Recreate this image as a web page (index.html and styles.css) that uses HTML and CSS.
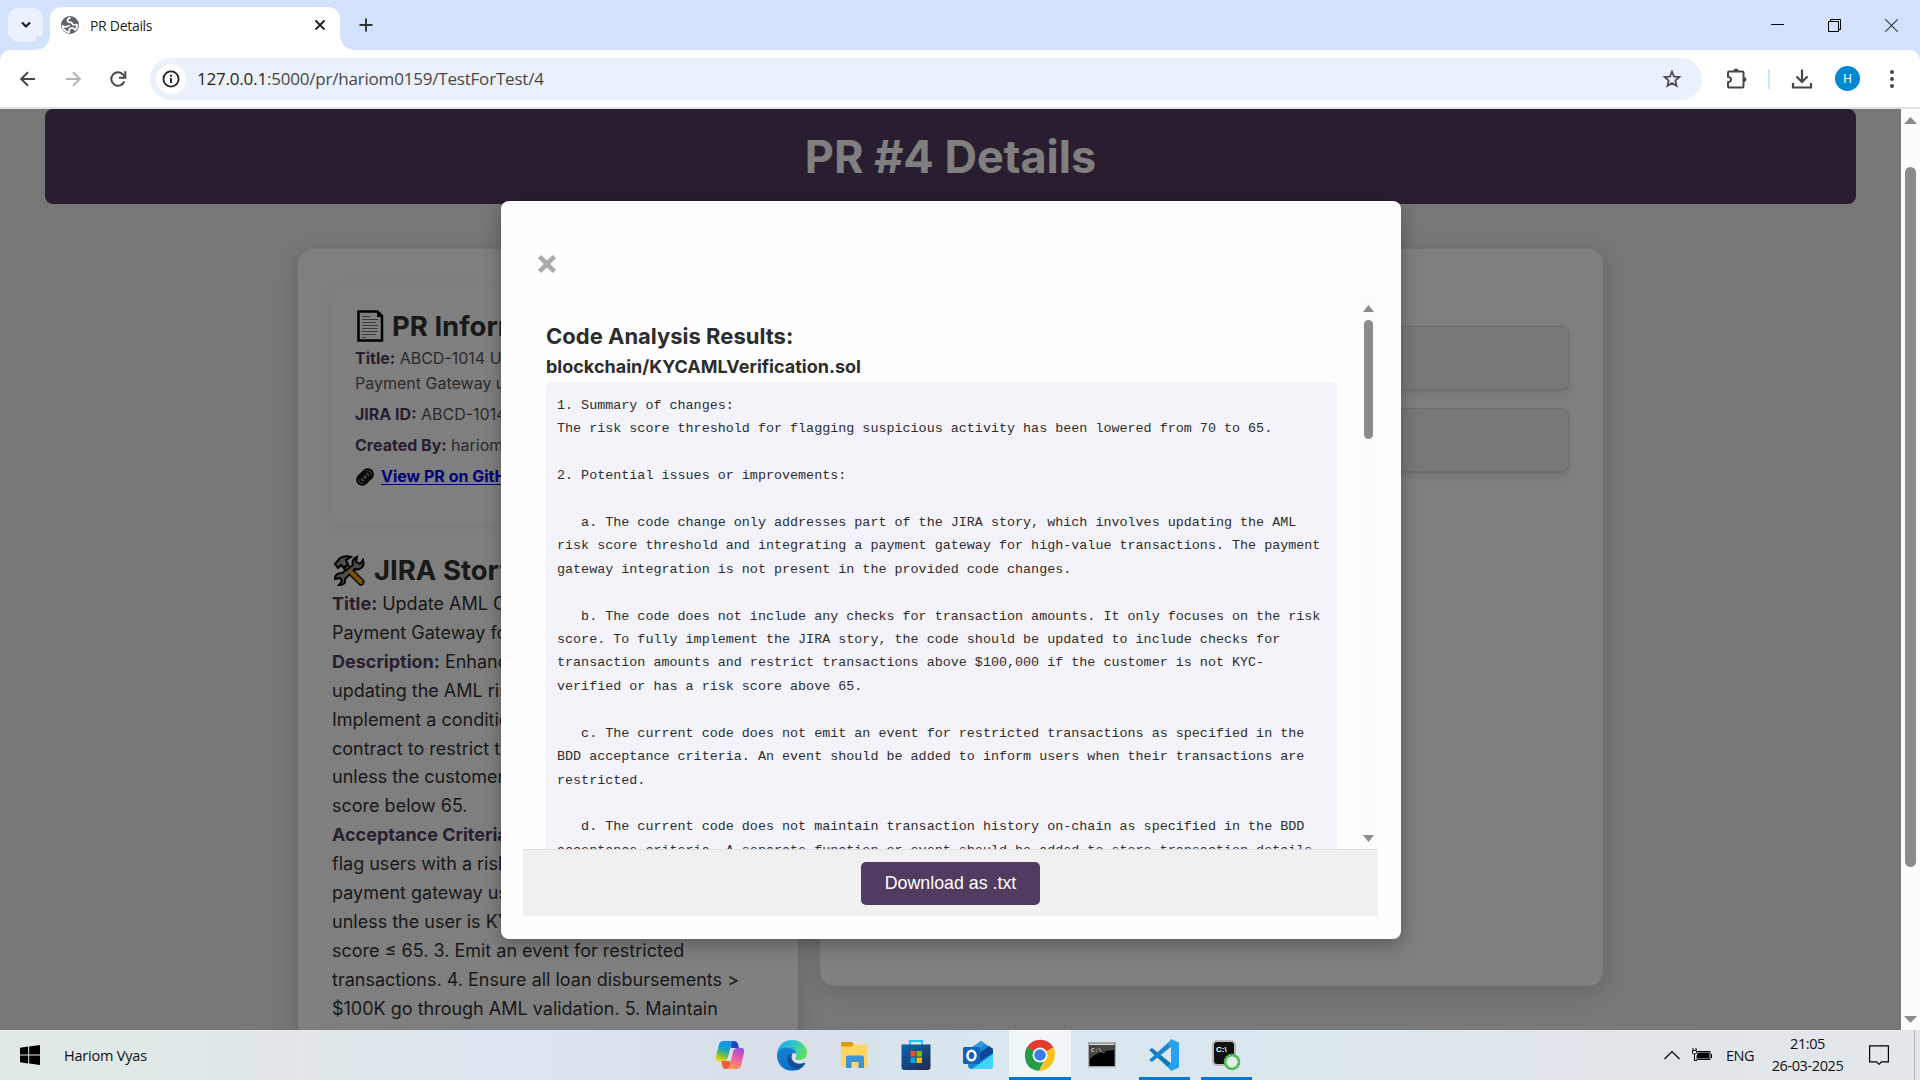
FILE: index.html
```html
<!DOCTYPE html>
<html lang="en">
<head>
<meta charset="utf-8">
<title>PR Details</title>
<link rel="stylesheet" href="styles.css">
</head>
<body>
<div class="tabstrip">
  <div class="tab-search"><svg width="12" height="8" viewBox="0 0 12 8"><path d="M2 1.5l4 4 4-4" fill="none" stroke="#1f1f1f" stroke-width="2.2"/></svg></div>
  <div class="tab">
    <svg class="globe" width="18" height="18" viewBox="0 0 18 18"><circle cx="9" cy="9" r="9" fill="#5f6368"/><path d="M9.5 1.6C7 2.4 6.3 3.6 6.6 5c.3 1.2 1.8 1.3 3.4 1.3 1.4 0 .8 2 2.2 2.4 1.4.5 2.6-.6 4.2.2-.2 2-1 3.800-2.200 5-1.300-.1-1.200-1.800-2.600-2-1.600-.3-2.300.5-3.200 1.500-.8.900.2 1.800-.3 2.900C4.500 15.900 2 13.200 1.700 10c1 .3 2.200 1 3.700.800 1.500-.3 1.900-1.200 3.400-1.300" fill="none" stroke="#fff" stroke-width="1.7"/></svg>
    <span class="tab-title">PR Details</span>
    <svg class="tab-close" width="12" height="12" viewBox="0 0 12 12"><path d="M1.500 1.500l9 9M10.500 1.500l-9 9" stroke="#1f1f1f" stroke-width="1.800"/></svg>
  </div>
  <svg class="tab-new" width="14" height="14" viewBox="0 0 14 14"><path d="M7 .5v13M.5 7h13" stroke="#333" stroke-width="1.900"/></svg>
  <div class="window-controls">
    <svg width="13" height="13" viewBox="0 0 13 13"><path d="M0 5.500h13" stroke="#000"/></svg>
    <svg width="13" height="13" viewBox="0 0 13 13"><path d="M.5 2.500h10v10h-10zM2.500 2.500v-2h10v10h-2" fill="none" stroke="#000"/></svg>
    <svg width="13" height="13" viewBox="0 0 13 13"><path d="M.3.3l12.400 12.400M12.700.3L.3 12.700" stroke="#333" stroke-width="1.100"/></svg>
  </div>
</div>
<div class="toolbar">
  <div class="nav">
    <svg width="20" height="20" viewBox="0 0 20 20"><path d="M17 10H3.500M10 3.200L3.200 10l6.800 6.800" fill="none" stroke="#474747" stroke-width="2"/></svg>
    <svg width="20" height="20" viewBox="0 0 20 20"><path d="M3 10h13.500M10 3.200l6.800 6.800-6.800 6.800" fill="none" stroke="#b4b4b4" stroke-width="2"/></svg>
    <svg width="20" height="20" viewBox="0 0 20 20"><path d="M16.300 12.300A6.700 6.700 0 1 1 15.500 6.200L16.500 7.500" fill="none" stroke="#474747" stroke-width="2"/><path d="M17.300 2.300v6.400h-6.400" fill="none" stroke="#474747" stroke-width="2"/></svg>
  </div>
  <div class="omnibox">
    <span class="site-info"><svg width="20" height="20" viewBox="0 0 20 20"><circle cx="10" cy="10" r="7.600" fill="none" stroke="#202124" stroke-width="1.800"/><path d="M10 9v5M10 5.800v1.900" stroke="#202124" stroke-width="1.900"/></svg></span>
    <span class="url"><b>127.0.0.1</b>:5000/pr/hariom0159/TestForTest/4</span>
    <svg class="star" width="20" height="20" viewBox="0 0 20 20"><path d="M10 2.500l2 5.100 5.400.4-4.100 3.500 1.300 5.400L10 14l-4.600 2.900 1.300-5.400L2.600 8l5.400-.4z" fill="none" stroke="#474747" stroke-width="1.700"/></svg>
  </div>
  <div class="actions">
    <svg width="22" height="22" viewBox="0 0 22 22"><path d="M2 4.500Q2 3.500 3 3.500h13.500q1 0 1 1V18.500q0 1-1 1H3q-1 0-1-1v-4.300q3-.4 3-2.700t-3-2.700z" fill="none" stroke="#474747" stroke-width="2"/><path d="M7.500 3a2.500 2.500 0 0 1 5 0zM18 9a2.500 2.500 0 0 1 0 5z" fill="#474747"/></svg>
    <i class="divider"></i>
    <svg width="22" height="22" viewBox="0 0 22 22"><path d="M11 1.500v12M5.500 8.500l5.500 5.500 5.500-5.500M2 15v4.500h18V15" fill="none" stroke="#474747" stroke-width="2.200"/></svg>
    <span class="avatar">H</span>
    <svg width="6" height="20" viewBox="0 0 6 20"><g fill="#474747"><circle cx="3" cy="3" r="2"/><circle cx="3" cy="10" r="2"/><circle cx="3" cy="17" r="2"/></g></svg>
  </div>
</div>

<div class="viewport">
  <div class="page">
    <header class="banner"><h1>PR #4 Details</h1></header>
    <main class="columns">
      <section class="card details">
        <div class="info">
          <h2><svg class="doc" width="27" height="32" viewBox="0 0 27 32"><path d="M1.500 1.500h19L25 6v24.500H1.500z" fill="#fff" stroke="#000" stroke-width="2.500"/><path d="M20 2v5h5" fill="#000"/><path d="M5 6.500h8M5 9.500h16M5 12.500h14M5 15.500h16M5 18.500h16M5 21.500h16M5 24.500h14M5 27.500h4" stroke="#777"/></svg>PR Information</h2>
          <p><b>Title:</b> ABCD-1014 Update<br>Payment Gateway using</p>
          <p><b>JIRA ID:</b> ABCD-1014</p>
          <p><b>Created By:</b> hariom0159</p>
          <a href="#"><svg class="clip" width="20" height="18" viewBox="0 0 20 18"><g transform="rotate(-45 10 9)" fill="none" stroke="#000"><rect x="1" y="4" width="18" height="10" rx="5" fill="#777" stroke-width="2"/><rect x="4" y="6" width="12" height="6" rx="3" stroke-width="1.500"/><circle cx="10" cy="9" r="2.500" stroke-width="1"/></g></svg> View PR on GitHub</a>
        </div>
        <h2><svg class="tools" width="32" height="31" viewBox="0 0 32 31"><path d="M13 12l15 15" stroke="#000" stroke-width="7" stroke-linecap="round"/><path d="M14 13l14 14" stroke="#f4a300" stroke-width="4" stroke-linecap="round"/><path d="M2 9l5-6q5-3 11-1l-5 3 2 4-4 4-3-3-3 3z" fill="#999" stroke="#000" stroke-width="2"/><path d="M20 10q-2-5 4-8l-1 5 4 2 3-4q2 7-4 9-2 1-4 0L12 24q1 6-6 6l3-4-2-3-5 1q0-6 7-6z" fill="#999" stroke="#000" stroke-width="2"/><path d="M18 17l9 9" stroke="#f4a300" stroke-width="4" stroke-linecap="round"/></svg>JIRA Story</h2>
        <div class="story">
          <b>Title:</b> Update AML Compliance<br>
          Payment Gateway for<br>
          <b>Description:</b> Enhance<br>
          updating the AML risk<br>
          Implement a condition<br>
          contract to restrict the<br>
          unless the customer<br>
          score below 65.<br>
          <b>Acceptance Criteria:</b><br>
          flag users with a risk<br>
          payment gateway using<br>
          unless the user is KYC<br>
          score ≤ 65. 3. Emit an event for restricted<br>
          transactions. 4. Ensure all loan disbursements &gt;<br>
          $100K go through AML validation. 5. Maintain<br>
          transaction history on-chain.
        </div>
      </section>
      <section class="card files">
        <div class="file"></div>
        <div class="file"></div>
      </section>
    </main>
    <div class="overlay">
      <div class="modal">
        <div class="modal-top"><span class="close">×</span></div>
        <div class="modal-scroll">
          <div class="results">
            <h3>Code Analysis Results:</h3>
            <h4>blockchain/KYCAMLVerification.sol</h4>
            <pre>1. Summary of changes:
The risk score threshold for flagging suspicious activity has been lowered from 70 to 65.

2. Potential issues or improvements:

   a. The code change only addresses part of the JIRA story, which involves updating the AML
risk score threshold and integrating a payment gateway for high-value transactions. The payment
gateway integration is not present in the provided code changes.

   b. The code does not include any checks for transaction amounts. It only focuses on the risk
score. To fully implement the JIRA story, the code should be updated to include checks for
transaction amounts and restrict transactions above $100,000 if the customer is not KYC-
verified or has a risk score above 65.

   c. The current code does not emit an event for restricted transactions as specified in the
BDD acceptance criteria. An event should be added to inform users when their transactions are
restricted.

   d. The current code does not maintain transaction history on-chain as specified in the BDD
acceptance criteria. A separate function or event should be added to store transaction details</pre>
          </div>
          <div class="bar inner"><i class="up"></i><i class="thumb"></i><i class="down"></i></div>
        </div>
        <div class="modal-foot"><button class="download">Download as .txt</button></div>
      </div>
    </div>
  </div>
  <div class="bar outer"><i class="up"></i><i class="thumb"></i><i class="down"></i></div>
</div>

<div class="taskbar">
  <svg class="start" width="20" height="20" viewBox="0 0 20 20"><path d="M0 2.800L8.200 1.600v7.900H0zM9.200 1.500L20 0v9.500H9.200zM0 10.500h8.200v7.900L0 17.200zM9.200 10.500H20V20L9.200 18.500z"/></svg>
  <span class="user">Hariom Vyas</span>
  <div class="apps">
    <span class="app"><svg width="30" height="30" viewBox="0 0 30 30"><defs><linearGradient id="c1" x1=".6" y1="0" x2=".3" y2="1"><stop offset="0" stop-color="#1a8fe8"/><stop offset=".4" stop-color="#159fd0"/><stop offset=".7" stop-color="#6dba4a"/><stop offset="1" stop-color="#f5d400"/></linearGradient><linearGradient id="c2" x1=".7" y1="0" x2=".3" y2="1"><stop offset="0" stop-color="#a14be8"/><stop offset=".5" stop-color="#f0609a"/><stop offset="1" stop-color="#ff9a55"/></linearGradient></defs><path d="M15 1h4.500q2.500 0 3.300 2.500L24 8h-8z" fill="#1a49c8"/><path d="M15 29h-4.500q-2.500 0-3.300-3L6.500 21h9z" fill="#f5603c"/><path d="M8.500 1H19q-1.800.5-2.500 3L13 17q-1 4-4.500 4H4q-4 0-3-4.500L4 4.500Q5 1 8.500 1z" fill="url(#c1)"/><path d="M21.500 29H12q1.800-.5 2.500-3L18 12q1-4 4.500-4H26q4 0 3 4.500l-3 13Q25 29 21.500 29z" fill="url(#c2)"/></svg></span>
    <span class="app"><svg width="30" height="31" viewBox="0 0 30 31"><defs><linearGradient id="e1" x1="0" y1=".2" x2="1" y2=".5"><stop offset="0" stop-color="#27a8e0"/><stop offset=".5" stop-color="#2bc3cf"/><stop offset="1" stop-color="#62e05a"/></linearGradient><linearGradient id="e2" x1="0" y1="0" x2=".5" y2="1"><stop offset="0" stop-color="#1583cf"/><stop offset="1" stop-color="#0a6fd0"/></linearGradient></defs><path d="M0 14C1 5 7 0 15 0c9 0 15 6 15 13 0 5-4 7-8 7-3 0-4.500-1.500-3-3 1-1.500 0-4-3-6C11 8 4 8 0 14z" fill="url(#e1)"/><path d="M0 15C1 9 6 7 11 8c5 0 8 3 8 6-2-2-5-1-5 4 0 6 5 10 9 11-4 2-9 2-13 1C4 28 0 22 0 15z" fill="url(#e2)"/><path d="M11 15c-2 5 1 13 9 15 4-1 6-3 8-6 .4-1-.5-1.500-1.500-1-3 1.400-8 1-10.500-2-1.500-2-2-4-1-6.500-1.500 0-3 .5-4 .5z" fill="#104f97"/></svg></span>
    <span class="app"><svg width="28" height="26" viewBox="0 0 28 26"><path d="M1 1q0-1 1-1h10l2 3v4H1z" fill="#dd9a04"/><path d="M1 4.500h11l2-2h12.500q1 0 1 1V24q0 1-1 1H2q-1 0-1-1z" fill="#ffd663"/><path d="M6 26V15.500q0-2 2-2h14q2 0 2 2V26h-5.500v-6h-7v6z" fill="#3d93d4"/></svg></span>
    <span class="app"><svg width="30" height="32" viewBox="0 0 30 32"><defs><linearGradient id="s1" x1="0" y1="0" x2=".7" y2="1"><stop offset="0" stop-color="#0966ae"/><stop offset="1" stop-color="#20305f"/></linearGradient></defs><path d="M9 6V2h12v4" fill="none" stroke="#25c0f2" stroke-width="2"/><path d="M.5 5.500h29V28q0 3-3 3h-23q-3 0-3-3z" fill="url(#s1)"/><path fill="#f25022" d="M9.500 12h5v5.500h-5z"/><path fill="#7fba00" d="M15.500 12h5.500v5.500h-5.500z"/><path fill="#00a4ef" d="M9.500 18.500h5V24h-5z"/><path fill="#ffb900" d="M15.500 18.500h5.500V24h-5.500z"/></svg></span>
    <span class="app"><svg width="31" height="30" viewBox="0 0 31 30"><path d="M5 10L18 1l12 8v16q0 4-4 4H9q-4 0-4-4z" fill="#1a86d0"/><path d="M5 10L18 1l4 3L9 16z" fill="#2e9be0"/><path d="M14 15l12-9 4 3v4L16 22z" fill="#0b479c"/><path d="M9 29l21-15v12q0 3-3 3z" fill="#41d3fb"/><rect y="7" width="17" height="17" rx="1.500" fill="#0f63b8"/><ellipse cx="8.500" cy="15.500" rx="4" ry="4.800" fill="none" stroke="#fff" stroke-width="2.500"/></svg></span>
    <span class="app active"><svg width="30" height="32" viewBox="0 0 30 32"><path d="M15 16L2 8.500A15.200 15.200 0 0 1 28.500 8.500z" fill="#e33b2e"/><path d="M15 16l13.500-8q3 7 0 14.500-4 9-14 9.500L21 18z" fill="#fcc31e"/><path d="M15 16l5 4-6 12Q4 31 1 23-1.500 15 2 8z" fill="#259b48"/><circle cx="15" cy="16" r="7.500" fill="#fff"/><circle cx="15" cy="16" r="5.800" fill="#3a7cec"/></svg></span>
    <span class="app"><svg width="28" height="26" viewBox="0 0 28 26"><rect x=".7" y=".7" width="26.600" height="24" fill="#000" stroke="#aaa" stroke-width="1.400"/><path d="M1.400 1.400h25.200V3H1.400z" fill="#ddd"/><path d="M1.400 3h25.200v5Q9 9 1.400 17z" fill="#444"/><text x="3" y="9.500" font-family="Liberation Mono" font-size="6" fill="#fff">C:\_</text></svg></span>
    <span class="app open"><svg width="30" height="32" viewBox="0 0 30 32"><path d="M0 11l3-2 20 16-1 6z" fill="#1577b8"/><path d="M0 21l3 2L23 7l-1-6z" fill="#1c86ca"/><path d="M22 0l8 3.500v25L22 32 19 27 22 24V8l-3-3z" fill="#27a3ee"/></svg></span>
    <span class="app open"><svg width="29" height="31" viewBox="0 0 29 31"><rect x="1" y="1" width="22" height="24" rx="4" fill="#111" stroke="#b9b9b9" stroke-width="2"/><text x="4" y="11.500" font-family="Liberation Sans" font-weight="700" font-size="8" fill="#fff">C:\</text><circle cx="20" cy="22" r="7" fill="#dff0e2" stroke="#42b14e" stroke-width="2.600"/><circle cx="20" cy="22" r="7" fill="none" stroke="#b9e2bd" stroke-width="1" stroke-dasharray="1 2"/></svg></span>
  </div>
  <div class="tray">
    <svg width="16" height="10" viewBox="0 0 16 10"><path d="M.5 9L8 1.500 15.500 9" fill="none" stroke="#000" stroke-width="1.200"/></svg>
    <svg class="battery" width="20" height="14" viewBox="0 0 20 14"><path d="M5 3.500h13v8H4.500M19.500 6v4" fill="none" stroke="#000"/><path d="M6 4.500h11v6H4.500V8z"/><path d="M1 0v2M4 0v2M.5 2.500h4V5l-1 1h-2L.5 5zM2.500 6v6.500H5" fill="none" stroke="#000"/></svg>
    <span class="lang">ENG</span>
    <div class="clock"><span>21:05</span><span>26-03-2025</span></div>
    <svg class="note" width="20" height="20" viewBox="0 0 20 20"><path d="M.6.8h18.800v16H12.500l-2.500 2.500-2.500-2.500H.6z" fill="none" stroke="#000" stroke-width="1.200"/></svg>
    <i class="desk"></i>
  </div>
</div>
</body>
</html>
```
FILE: styles.css
```css
* { box-sizing: border-box; }
body { margin: 0; width: 1920px; height: 1080px; overflow: hidden; display: flex; flex-direction: column; font-family: "Open Sans", "Noto Sans", sans-serif; background: #fff; }
svg { display: block; flex: none; }
h1, h2, h3, h4, p, pre { margin: 0; }
i { display: block; }

/* browser tabs */
.tabstrip { height: 50px; flex: none; background: #d3e3fd; display: flex; align-items: center; padding-left: 8px; }
.tab-search { width: 35px; height: 34px; border-radius: 11px; background: #ebf2fe; display: grid; place-items: center; margin-right: 7px; }
.tab { position: relative; width: 290px; height: 43px; align-self: flex-end; background: #fff; border-radius: 12px 12px 0 0; display: flex; align-items: center; padding: 0 14px 7px 11px; }
.tab::before, .tab::after { content: ""; position: absolute; bottom: 0; width: 14px; height: 14px; }
.tab::before { left: -14px; background: radial-gradient(circle at 0 0, #d3e3fd 13.500px, #fff 14px); }
.tab::after { right: -14px; background: radial-gradient(circle at 100% 0, #d3e3fd 13.500px, #fff 14px); }
.tab-title { margin-left: 11px; font-size: 14px; letter-spacing: -0.300px; color: #1f1f1f; flex: 1; }
.tab-new { margin-left: 19px; }
.window-controls { margin-left: auto; display: flex; gap: 44px; padding-right: 22px; }

/* browser toolbar */
.toolbar { height: 59px; flex: none; background: #fff; border-bottom: 2px solid #dfe4e1; display: flex; align-items: center; position: relative; }
.toolbar::before, .toolbar::after { content: ""; position: absolute; top: 0; width: 10px; height: 10px; }
.toolbar::before { left: 0; background: radial-gradient(circle at 100% 100%, #fff 9.500px, #d3e3fd 10px); }
.toolbar::after { right: 0; background: radial-gradient(circle at 0 100%, #fff 9.500px, #d3e3fd 10px); }
.nav { display: flex; gap: 25px; padding-left: 18px; width: 150px; }
.omnibox { width: 1552px; height: 42px; border-radius: 21px; background: #ebf1fa; display: flex; align-items: center; padding: 0 20px 0 6px; }
.site-info { width: 30px; height: 30px; border-radius: 50%; background: #fff; display: grid; place-items: center; }
.url { flex: 1; margin-left: 11px; font-size: 17px; color: #474747; letter-spacing: -0.200px; }
.url b { font-weight: 400; color: #1f1f1f; }
.actions { display: flex; align-items: center; padding-left: 24px; }
.divider { width: 2px; height: 20px; background: #d3e3fd; margin: 0 21px 0 20px; }
.avatar { width: 25px; height: 25px; border-radius: 50%; background: #0288d1; color: #fff; font: 12px Roboto, sans-serif; display: grid; place-items: center; margin: 0 29px 0 22px; }

/* page content */
.viewport { height: 921px; flex: none; display: flex; }
.page { width: 1901px; position: relative; overflow: hidden; background: #eee; font-family: Inter, sans-serif; }
.banner { margin: 0 45px; height: 95px; background: #503c60; border-radius: 8px; text-align: center; }
.banner h1 { font-size: 45px; line-height: 95px; color: #fff; letter-spacing: 0; }
.columns { display: flex; gap: 22px; padding: 45px 0 0 298px; }
.card { background: #fff; border-radius: 15px; box-shadow: 0 5px 25px rgba(0, 0, 0, .15); }
.details { width: 500px; height: 900px; padding: 34px; white-space: nowrap; }
.files { width: 783px; height: 737px; padding: 77px 34px; display: flex; flex-direction: column; gap: 17px; }
.file { height: 65px; background: #f1f1f1; border: 1px solid #dcdcdc; border-bottom-width: 2px; border-radius: 8px; box-shadow: 0 3px 8px rgba(0, 0, 0, .1); }
.info { height: 242px; padding: 23px; border-radius: 10px; box-shadow: 0 2px 12px rgba(0, 0, 0, .05); margin-bottom: 25px; color: #555; font-size: 16px; line-height: 25px; }
h2 { display: flex; align-items: center; font-size: 27.500px; line-height: 40px; color: #333; }
.doc { margin: 0 8px 0 2px; }
.tools { margin: 0 9px 0 1px; }
.info p { margin-bottom: 6px; }
.info b, .story b { color: #503c60; font-weight: 700; }
.info a { display: inline-flex; gap: 6px; align-items: center; font-weight: 700; color: #00e; text-decoration: underline; text-underline-offset: 2px; }
.story { font-size: 18px; line-height: 28.900px; color: #333; }

/* results dialog */
.overlay { position: absolute; inset: 0; background: rgba(0, 0, 0, .5); padding: 92px 0 0 501px; }
.modal { width: 900px; height: 738px; background: #fefefe; border-radius: 8px; padding: 0 23px 23px 22px; box-shadow: 0 5px 18px rgba(0, 0, 0, .3); display: flex; flex-direction: column; }
.modal-top { height: 96px; padding: 36px 0 0 12px; }
.close { font-size: 35px; font-weight: 700; line-height: 48px; color: #aaa; display: block; }
.modal-scroll { height: 552px; display: flex; overflow: hidden; }
.results { width: 836px; padding: 23px 22px 0 23px; color: #2d2d2d; }
h3 { font-size: 22px; line-height: 32px; }
h4 { font-size: 18px; line-height: 30px; }
pre { margin-top: 0; padding: 12px 11px; background: #f4f3f9; border-radius: 6px; font: 13.400px/23.400px "Liberation Mono", monospace; color: #2d2d2d; height: 520px; }
.modal-foot { height: 67px; background: #f0f0f0; border-top: 1px solid #ddd; display: flex; justify-content: center; padding-top: 12px; }
.download { width: 179px; height: 43px; border: 0; border-radius: 5px; background: #503c60; color: #fff; font: 17.800px "Liberation Sans", sans-serif; padding: 0; }

/* scrollbars */
.bar { width: 19px; background: #fcfcfc; display: flex; flex-direction: column; align-items: center; }
.bar i { flex: none; }
.thumb { background: #8b8b8b; border-radius: 6px; width: 11px; }
.up, .down { width: 13px; height: 7px; background: #8b8b8b; }
.up { clip-path: polygon(50% 0, 100% 100%, 0 100%); }
.down { clip-path: polygon(0 0, 100% 0, 50% 100%); }
.inner { padding: 8px 0; }
.inner .up, .inner .down { width: 11px; }
.inner .thumb { height: 119px; width: 9px; margin: 8px 0 396px; }
.outer { padding: 8px 0; }
.outer .thumb { height: 700px; margin: 43px 0 149px; }

/* taskbar */
.taskbar { height: 50px; flex: none; display: flex; align-items: center; padding-left: 20px; background: linear-gradient(90deg, #e1e9e6 0, #e0e6e9 300px, #dde6ef 500px, #d7dee7 760px, #dae7ee 1000px, #dbe7ee 1250px, #e0e5ea 1600px, #e2e7eb 1920px); color: #111; }
.user { margin-left: 24px; width: 635px; font-size: 14.500px; letter-spacing: -0.200px; }
.apps { display: flex; height: 50px; }
.app { width: 62px; display: grid; place-items: center; position: relative; }
.app.active { background: #f1f6f9; }
.app.active::after, .app.open::after { content: ""; position: absolute; bottom: 0; height: 3px; left: 6px; right: 5px; background: #0078d7; }
.app.active::after { left: 0; right: 0; }
.tray { margin-left: auto; display: flex; align-items: center; font-size: 14.500px; }
.battery { margin: 0 14px 0 12px; }
.lang { letter-spacing: -0.500px; width: 27px; }
.clock { width: 77px; margin: 0 23px 0 16px; display: flex; flex-direction: column; align-items: center; line-height: 22.500px; letter-spacing: -0.400px; }
.desk { width: 1px; height: 50px; background: #b0b4b8; margin: 0 5px 0 25px; }
```
